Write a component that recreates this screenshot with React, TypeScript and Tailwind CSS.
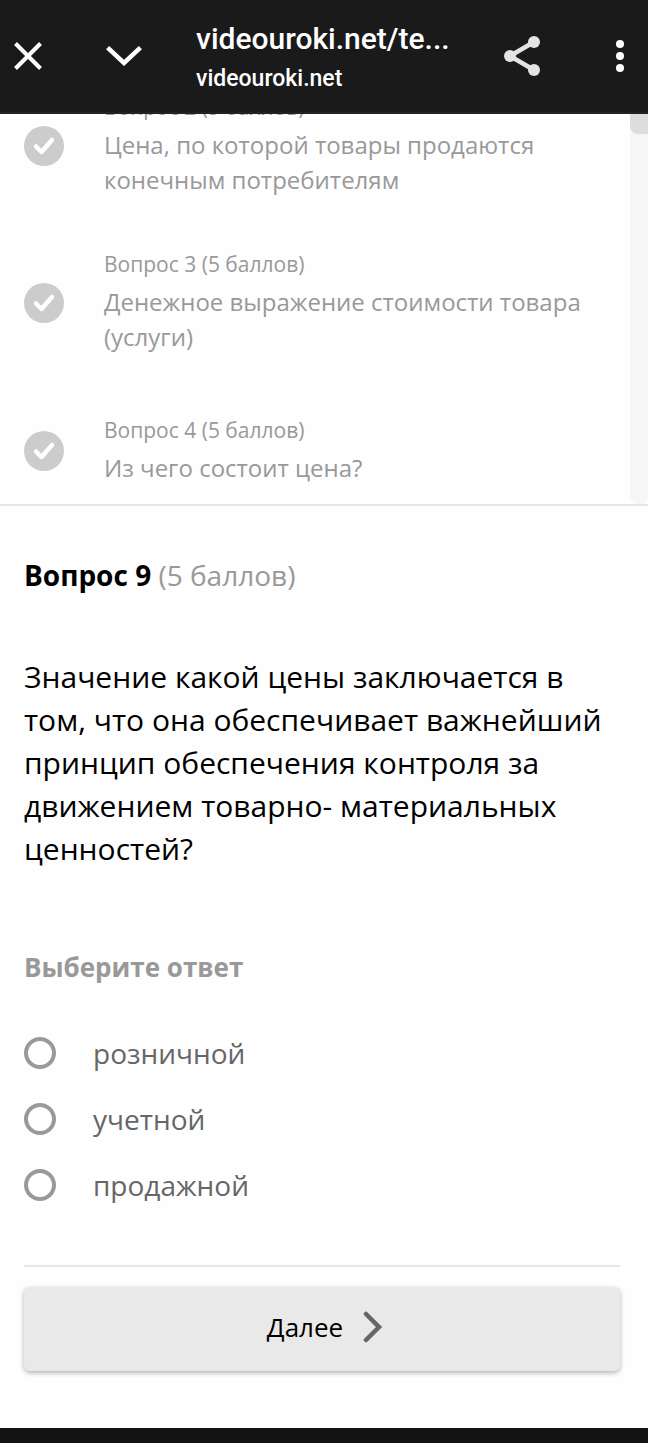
import { useState } from 'react';

type Question = {
  number: number;
  text: string;
};

const ANSWERED: Question[] = [
  { number: 2, text: 'Цена, по которой товары продаются конечным потребителям' },
  { number: 3, text: 'Денежное выражение стоимости товара (услуги)' },
  { number: 4, text: 'Из чего состоит цена?' },
];

const OPTIONS = ['розничной', 'учетной', 'продажной'];

function BrowserBar() {
  return (
    <header className="flex h-[114px] items-center border-b-2 border-[#222] bg-[#1a1a1a] pr-6 pl-3.5 text-white">
      <button type="button" aria-label="Закрыть" className="flex-none">
        <svg width="28" height="28" viewBox="0 0 28 28" fill="none" stroke="currentColor" strokeWidth="4">
          <path d="M1.5 1.5l25 25M26.5 1.5l-25 25" />
        </svg>
      </button>
      <button type="button" aria-label="Свернуть" className="ml-16 flex-none">
        <svg width="36" height="20" viewBox="0 0 36 20" fill="none" stroke="currentColor" strokeWidth="4.5">
          <path d="M1.6 1.6L18 17L34.4 1.6" />
        </svg>
      </button>
      <div className="ml-[54px] min-w-0 flex-1 pt-1.5 font-['Roboto',sans-serif] font-medium">
        <p className="text-[30px] leading-10">videouroki.net/te...</p>
        <p className="text-[23px] leading-10">videouroki.net</p>
      </div>
      <button type="button" aria-label="Поделиться" className="flex-none text-[#e4e4e6]">
        <svg width="36" height="40" viewBox="0 0 36 40" fill="currentColor">
          <path d="M30 6L6 20l24 14" fill="none" stroke="currentColor" strokeWidth="4.5" />
          <circle cx="30" cy="6" r="6" />
          <circle cx="6" cy="20" r="6" />
          <circle cx="30" cy="34" r="6" />
        </svg>
      </button>
      <button type="button" aria-label="Меню" className="ml-[76px] flex-none">
        <svg width="8" height="32" viewBox="0 0 8 32" fill="currentColor">
          <circle cx="4" cy="4" r="4" />
          <circle cx="4" cy="16" r="4" />
          <circle cx="4" cy="28" r="4" />
        </svg>
      </button>
    </header>
  );
}

function AnsweredList({ questions }: { questions: Question[] }) {
  return (
    <section className="flex h-[392px] overflow-hidden border-b-2 border-[#e5e5e5]">
      {/* scrolled a little way down, so the first row is cut off by the bar */}
      <ul role="list" className="-mt-[47px] min-w-0 flex-1 pr-6 pl-6">
        {questions.map((question) => (
          <li key={question.number} className="flex min-h-[139px] items-center gap-10 py-[25px] text-[#999]">
            <svg className="flex-none" width="40" height="40" viewBox="0 0 40 40" fill="none">
              <circle cx="20" cy="20" r="20" fill="#ccc" />
              <path
                d="M12 20.5l5.5 5.5L28 14"
                stroke="#fff"
                strokeWidth="4.5"
                strokeLinecap="round"
                strokeLinejoin="round"
              />
            </svg>
            <div className="pb-0.5">
              <p className="mb-[5px] text-[21px] leading-[30px]">Вопрос {question.number} (5 баллов)</p>
              <p className="text-[24px] leading-[35px]">{question.text}</p>
            </div>
          </li>
        ))}
      </ul>
      <div className="w-[18px] flex-none rounded-b-lg bg-[#f6f6f6]">
        <div className="h-5 rounded-bl-lg bg-[#ddd]" />
      </div>
    </section>
  );
}

export default function App() {
  const [answer, setAnswer] = useState('');

  return (
    <div className="flex min-h-screen flex-col bg-[#fefefe] font-['Open_Sans',sans-serif] text-black">
      <BrowserBar />
      <AnsweredList questions={ANSWERED} />
      <main className="flex-1 pt-[49px] pr-7 pb-[57px] pl-6">
        <h1 className="text-[28px] leading-10 font-bold">
          Вопрос 9 <span className="font-normal text-[#999]">(5 баллов)</span>
        </h1>
        <p className="mt-15 text-[30px] leading-[43px]">
          Значение какой цены заключается в том, что она обеспечивает важнейший принцип обеспечения
          контроля за движением товарно- материальных ценностей?
        </p>
        <fieldset className="mt-[79px]">
          <legend className="text-[26px] leading-9 font-bold text-[#999]">Выберите ответ</legend>
          <div className="pt-[35px]">
            {OPTIONS.map((option) => (
              <label key={option} className="flex h-[66px] items-center gap-[37px] text-[28px] leading-10 text-[#666]">
                <input
                  type="radio"
                  name="answer"
                  value={option}
                  checked={answer === option}
                  onChange={() => setAnswer(option)}
                  className="size-8 flex-none appearance-none rounded-full border-4 border-[#999] checked:bg-[#999]"
                />
                {option}
              </label>
            ))}
          </div>
        </fieldset>
        <hr className="mt-[47px] border-t-2 border-[#e5e5e5]" />
        <button
          type="button"
          className="mt-5 flex h-[84px] w-full items-center justify-center gap-5 rounded-md bg-[#e9e9e9] pb-1 pl-1.5 text-[26px] shadow-[0_2px_5px_rgba(0,0,0,0.3)]"
        >
          Далее
          <svg width="20" height="32" viewBox="0 0 20 32" fill="none" stroke="#666" strokeWidth="4.5">
            <path d="M3 3l13 13L3 29" strokeLinecap="round" />
          </svg>
        </button>
      </main>
      <footer className="h-[15px] bg-[#141312]" />
    </div>
  );
}
